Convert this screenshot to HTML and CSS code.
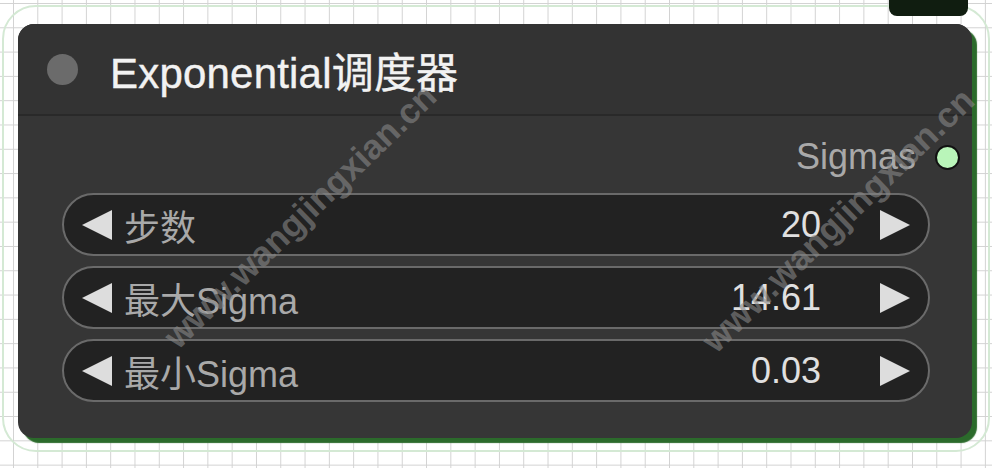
FILE: index.html
```html
<!DOCTYPE html>
<html lang="zh-CN">
<head>
  <meta charset="UTF-8" />
  <meta name="viewport" content="width=device-width, initial-scale=1.0"/>
  <title>Exponential调度器</title>
  <link rel="stylesheet" href="styles.css">
</head>
<body>
  <div class="peek-node"></div>

  <div class="frame">
    <div class="node">
      <div class="node-header">
        <span class="node-dot"></span>
        <span class="node-title">Exponential调度器</span>
      </div>
      <div class="node-body">
        <div class="output">
          <span>Sigmas</span>
          <span class="output-dot"></span>
        </div>

        <div class="widget">
          <svg class="arrow" viewBox="0 0 30 30"><polygon points="30,0 30,30 0,15"/></svg>
          <span class="label">步数</span>
          <span class="value">20</span>
          <svg class="arrow" viewBox="0 0 30 30"><polygon points="0,0 0,30 30,15"/></svg>
        </div>
        <div class="widget">
          <svg class="arrow" viewBox="0 0 30 30"><polygon points="30,0 30,30 0,15"/></svg>
          <span class="label">最大Sigma</span>
          <span class="value">14.61</span>
          <svg class="arrow" viewBox="0 0 30 30"><polygon points="0,0 0,30 30,15"/></svg>
        </div>
        <div class="widget">
          <svg class="arrow" viewBox="0 0 30 30"><polygon points="30,0 30,30 0,15"/></svg>
          <span class="label">最小Sigma</span>
          <span class="value">0.03</span>
          <svg class="arrow" viewBox="0 0 30 30"><polygon points="0,0 0,30 30,15"/></svg>
        </div>
      </div>
    </div>
  </div>

  <div class="watermark wm-left">www.wangjingxian.cn</div>
  <div class="watermark wm-right">www.wangjingxian.cn</div>
</body>
</html>
```

FILE: styles.css
```css
html, body {
  margin: 0;
  height: 100%;
}
body {
  position: relative;
  overflow: hidden;
  background-color: #ffffff;
  background-image:
    linear-gradient(to right, #d2d2d2 1px, transparent 1px),
    linear-gradient(to bottom, #d2d2d2 1px, transparent 1px);
  background-size: 24.3px 24.3px;
  background-position: 13px 3px;
  font-family: 'Liberation Sans', 'Noto Sans CJK SC', sans-serif;
}
.peek-node {
  position: absolute;
  left: 889px;
  top: -10px;
  width: 79px;
  height: 26px;
  background-color: #101d10;
  border-radius: 8px;
}
.frame {
  margin: 5px 2px 0 2px;
  border: 2px solid #d4e9d4;
  border-radius: 34px;
  padding: 17px 16px 12px 14px;
}
.node {
  background-color: #363636;
  border-radius: 16px;
  box-shadow: 5px 5px 1px #2b6a2b;
  overflow: hidden;
}
.node-header {
  height: 90px;
  display: flex;
  align-items: center;
  gap: 32px;
  padding-left: 29px;
  background-color: #333333;
  border-bottom: 2px solid #292929;
}
.node-dot {
  width: 31px;
  height: 31px;
  border-radius: 50%;
  background-color: #6b6b6b;
}
.node-title {
  color: #f2f2f2;
  font-size: 42px;
  letter-spacing: 0.2px;
  -webkit-text-stroke: 0.4px #f2f2f2;
}
.node-body {
  padding: 21px 0 36px 0;
}
.output {
  height: 40px;
  display: flex;
  align-items: center;
  justify-content: flex-end;
  gap: 19px;
  padding-right: 12px;
  margin-bottom: 16px;
  color: #a9a9a9;
  font-size: 36px;
}
.output-dot {
  width: 21px;
  height: 21px;
  border-radius: 50%;
  background-color: #b9f5b9;
  border: 2px solid #111111;
}
.widget {
  height: 59px;
  margin: 0 42px 10px 44px;
  display: flex;
  align-items: center;
  padding: 0 18px;
  background-color: #222222;
  border: 2px solid #6a6a6a;
  border-radius: 32px;
  font-size: 36px;
}
.widget:last-child {
  margin-bottom: 0;
}
.arrow {
  width: 30px;
  height: 30px;
  fill: #dddddd;
  flex: none;
}
.label {
  margin-left: 12px;
  color: #a9a9a9;
  flex: 1;
}
.value {
  margin-right: 59px;
  color: #e0e0e0;
}
.watermark {
  position: absolute;
  transform: translate(-50%, -50%) rotate(-44deg);
  font-family: 'Liberation Sans', sans-serif;
  font-weight: bold;
  font-size: 35px;
  color: rgba(135, 135, 135, 0.6);
  white-space: nowrap;
}
.wm-left {
  left: 300px;
  top: 216px;
}
.wm-right {
  left: 838px;
  top: 220px;
}
```
